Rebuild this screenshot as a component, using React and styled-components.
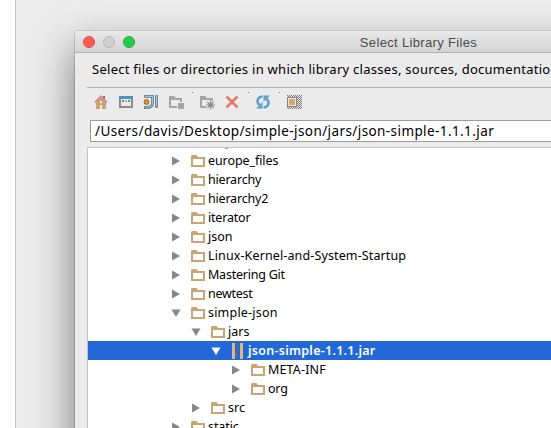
import React from "react";
import styled, { createGlobalStyle, css } from "styled-components";

const Global = createGlobalStyle`
  * { box-sizing: border-box; }
  body { margin: 0; background: #fff; }
`;

const uiFont = css`
  font-family: "Noto Sans", "Open Sans", sans-serif;
`;

const Screen = styled.div`
  width: 551px;
  height: 428px;
  padding-left: 15px;
  overflow: hidden;
  background: #fff;
`;

const Backdrop = styled.div`
  height: 428px;
  padding: 30px 0 0 59px;
  border-left: 1px solid #c6c6c6;
  background: #ececec;
  overflow: hidden;
`;

const Dialog = styled.section`
  width: 687px;
  height: 560px;
  border-radius: 5px 5px 0 0;
  background: #ebebeb;
  box-shadow: -1px 0 0 rgba(0, 0, 0, 0.14), 0 19px 42px rgba(0, 0, 0, 0.5);
  overflow: hidden;
`;

const TitleBar = styled.header`
  display: grid;
  grid-template-columns: 60px 1fr 60px;
  align-items: center;
  height: 23px;
  border-top: 1px solid #c4c4c4;
  border-bottom: 1px solid #b1b1b1;
  background: linear-gradient(#f0f0f0 0, #e6e6e6 2px, #d4d4d4 100%);
`;

const Lights = styled.div`
  display: flex;
  gap: 8px;
  padding-left: 8px;
`;

const Light = styled.span`
  flex: none;
  width: 12px;
  height: 12px;
  border-radius: 50%;
  border: 1px solid ${(p) => p.$edge};
  background: ${(p) => p.$fill};
`;

const Title = styled.h1`
  margin: 0;
  padding-top: 2px;
  text-align: center;
  font: 400 13px/20px "Liberation Sans", Arial, sans-serif;
  letter-spacing: 0.34px;
  color: #4b4b4b;
  white-space: nowrap;
`;

const Prompt = styled.p`
  ${uiFont}
  margin: 0;
  padding-left: 17px;
  height: 34px;
  font-size: 13px;
  line-height: 33px;
  letter-spacing: 0.27px;
  color: #000;
  white-space: nowrap;
`;

const Toolbar = styled.div`
  display: flex;
  align-items: flex-start;
  height: 33px;
  margin-left: 12px;
  padding: 6px 0 0 6px;
  border-top: 1px solid #b2b2b2;
`;

const Tool = styled.span`
  display: block;
  width: 16px;
  height: 16px;
  margin-right: ${(p) => p.$after ?? 9}px;
  svg { display: block; }
`;

const Divider = styled.span`
  width: 1px;
  height: 1px;
  margin: -2px ${(p) => p.$after}px 0 0;
  background: #777;
`;

const PathField = styled.div`
  ${uiFont}
  height: 22px;
  margin-left: 15px;
  padding-left: 4px;
  border: 1px solid #9c9c9c;
  background: #fff;
  font-size: 13.5px;
  line-height: 20px;
  letter-spacing: 0.41px;
  color: #000;
  white-space: nowrap;
`;

const Tree = styled.div`
  margin: 5px 0 0 12px;
  height: 400px;
  border: 1px solid #c4c4c4;
  background: #fff;
  overflow: hidden;
`;

const TreeRows = styled.div`
  margin-top: -16px;
`;

const Row = styled.div`
  display: flex;
  align-items: center;
  height: 19px;
  padding-left: ${(p) => 83 + p.$depth * 20}px;
  background: ${(p) => (p.$selected ? "#2268d9" : "transparent")};
  color: ${(p) => (p.$selected ? "#fff" : "#000")};
  svg { flex: none; }
`;

const Label = styled.span`
  ${uiFont}
  margin-left: ${(p) => (p.$selected ? 4 : 2)}px;
  font-size: 12.5px;
  font-weight: ${(p) => (p.$selected ? 600 : 400)};
  line-height: 19px;
  letter-spacing: ${(p) => p.$track}px;
  white-space: nowrap;
`;

const Arrow = ({ open, selected }) => (
  <svg width="20" height="16" viewBox="0 0 20 16">
    <path
      d={open ? "M.5 4.5H9.500L5 12Z" : "M1 3.500L9 8L1 12.500Z"}
      fill={selected ? "#fff" : "#878787"}
    />
  </svg>
);

const Folder = () => (
  <svg width="15" height="16" viewBox="0 0 15 16">
    <path fillRule="evenodd" fill="#c9a474" d="M0 3L1 2H5.500L7 4H14V14H0ZM2 6V12H12V6Z" />
  </svg>
);

const Jar = () => (
  <svg width="13" height="16" viewBox="0 0 13 16">
    <path fill="#dfb67c" d="M1 0h3v16H1zM9 0h3v16H9z" />
    <path d="M5.500 0V16M7.500 0V16" stroke="#626c78" strokeDasharray="1 1" />
    <path d="M6.500 1V16" stroke="#45659b" strokeDasharray="1 1" />
  </svg>
);

const Home = () => (
  <svg width="16" height="16" viewBox="0 0 16 16">
    <path fill="#77716d" d="M10 2h2v4h-2z" />
    <path fill="#c9a474" d="M3 8L8 3.500L13 8V15H9V11H7V15H3Z" />
    <path fill="#f5ead6" d="M7 7h2v2H7z" />
    <path d="M2 8.500L8 2.500L14 8.500" fill="none" stroke="#dc8c85" strokeWidth="2" />
  </svg>
);

const Desktop = () => (
  <svg width="16" height="16" viewBox="0 0 16 16">
    <path fill="#8b8b8b" d="M1 5H3V12H13V5H15V14H1Z" />
    <path fill="#4595c2" d="M1 2h14v3H1z" />
    <path fill="#4a8fb5" d="M4 6h2v2H4zM10 6h2v2h-2z" />
    <path fill="#d9a45c" d="M7 6h2v2H7z" />
  </svg>
);

const Project = () => (
  <svg width="16" height="16" viewBox="0 0 16 16">
    <path fill="#6f8c9c" d="M1 1H11V9C11 13 8 15 4 15H1V12H4C6.500 12 8 11 8 9V4H1Z" />
    <path d="M2 2.500H9.500V9C9.500 12 7 13.500 3 13.500" fill="none" stroke="#a8c3cf" />
    <rect x="12" y="1" width="3" height="13" rx="1" fill="#6f8c9c" />
    <path d="M13.500 2V12" stroke="#a8c3cf" />
    <circle cx="3.500" cy="8" r="2.500" fill="#e58b2a" stroke="#a56a35" />
  </svg>
);

const Module = () => (
  <svg width="16" height="16" viewBox="0 0 16 16">
    <path fill="#a5a5a5" d="M1 2H6L8 4H14V8H12V6H3V12H9V14H1Z" />
    <path fill="#a5a5a5" d="M10 9h6v6h-6z" />
  </svg>
);

const NewFolder = () => (
  <svg width="16" height="16" viewBox="0 0 16 16">
    <path fill="#a5a5a5" d="M1 2H6L8 4H14V7H12V6H3V12H7V14H1Z" />
    <path d="M11.500 6.500V15.500M7 11H16M8.300 7.800L14.700 14.200M14.700 7.800L8.300 14.200" stroke="#8e8e8e" strokeWidth="1.200" />
    <circle cx="11.500" cy="11" r="2.300" fill="#8e8e8e" />
  </svg>
);

const Delete = () => (
  <svg width="16" height="16" viewBox="0 0 16 16">
    <path d="M2.500 2.500L13.500 13.500M13.500 2.500L2.500 13.500" stroke="#e3796c" strokeWidth="2.600" />
  </svg>
);

const Refresh = () => (
  <svg width="16" height="16" viewBox="0 0 16 16">
    <path d="M7.500 2.500C3.500 2.500 1.300 6.500 3 9.500L4.500 11M8.500 13.500C12.500 13.500 14.700 9.500 13 6.500L11.500 5" fill="none" stroke="#5ba4cc" strokeWidth="2.600" />
    <path fill="#5ba4cc" d="M1 14.500H7.500V8ZM15 1.500H8.500V8Z" />
  </svg>
);

const Hidden = () => (
  <svg width="16" height="16" viewBox="0 0 16 16" shapeRendering="crispEdges">
    <defs>
      <pattern id="checker" width="2" height="2" patternUnits="userSpaceOnUse">
        <path fill="#777" d="M0 0h1v1H0zM1 1h1v1H1z" />
      </pattern>
    </defs>
    <path fill="url(#checker)" d="M1 1h15v14H1z" />
    <path fill="#858585" d="M1 3h10v10H1z" />
    <path fill="#e8e8e8" d="M2 4h8v8H2z" />
    <path fill="#dba75d" d="M3 5h6v6H3z" />
  </svg>
);

const entries = [
  { name: "europe_files", depth: 0, track: -0.08 },
  { name: "hierarchy", depth: 0, track: -0.2 },
  { name: "hierarchy2", depth: 0, track: -0.2 },
  { name: "iterator", depth: 0, track: -0.2 },
  { name: "json", depth: 0, track: 0 },
  { name: "Linux-Kernel-and-System-Startup", depth: 0, track: 0.125 },
  { name: "Mastering Git", depth: 0, track: -0.23 },
  { name: "newtest", depth: 0, track: -0.28 },
  { name: "simple-json", depth: 0, track: 0.2, open: true },
  { name: "jars", depth: 1, track: 0, open: true },
  { name: "json-simple-1.1.1.jar", depth: 2, track: 0.27, open: true, selected: true },
  { name: "META-INF", depth: 3, track: 0.15 },
  { name: "org", depth: 3, track: -0.2 },
  { name: "src", depth: 1, track: 0 },
  { name: "static", depth: 0, track: -0.1 },
];

/* The row scrolled above the tree's top edge: only its descender shows. */
const ScrolledRow = styled.div`
  height: 19px;
  padding-left: 135px;
  svg { display: block; }
`;

export default function App() {
  return (
    <>
      <Global />
      <Screen>
        <Backdrop>
          <Dialog>
            <TitleBar>
              <Lights>
                <Light $fill="#ff5b57" $edge="#e24a48" />
                <Light $fill="#d0d0d0" $edge="#b9b9b9" />
                <Light $fill="#26cc4b" $edge="#1fae3a" />
              </Lights>
              <Title>Select Library Files</Title>
            </TitleBar>
            <Prompt>
              Select files or directories in which library classes, sources, documentatio
            </Prompt>
            <Toolbar>
              <Tool><Home /></Tool>
              <Tool><Desktop /></Tool>
              <Tool><Project /></Tool>
              <Tool $after={8}><Module /></Tool>
              <Divider $after={6} />
              <Tool><NewFolder /></Tool>
              <Tool $after={8}><Delete /></Tool>
              <Divider $after={6} />
              <Tool $after={8}><Refresh /></Tool>
              <Divider $after={6} />
              <Tool><Hidden /></Tool>
            </Toolbar>
            <PathField>/Users/davis/Desktop/simple-json/jars/json-simple-1.1.1.jar</PathField>
            <Tree>
              <TreeRows>
                <ScrolledRow>
                  <svg width="8" height="18" viewBox="0 0 8 18">
                    <path d="M2 16.500H5" stroke="#999" />
                  </svg>
                </ScrolledRow>
                {entries.map((e) => (
                  <Row key={e.name} $depth={e.depth} $selected={e.selected}>
                    <Arrow open={e.open} selected={e.selected} />
                    {e.selected ? <Jar /> : <Folder />}
                    <Label $track={e.track} $selected={e.selected}>{e.name}</Label>
                  </Row>
                ))}
              </TreeRows>
            </Tree>
          </Dialog>
        </Backdrop>
      </Screen>
    </>
  );
}
